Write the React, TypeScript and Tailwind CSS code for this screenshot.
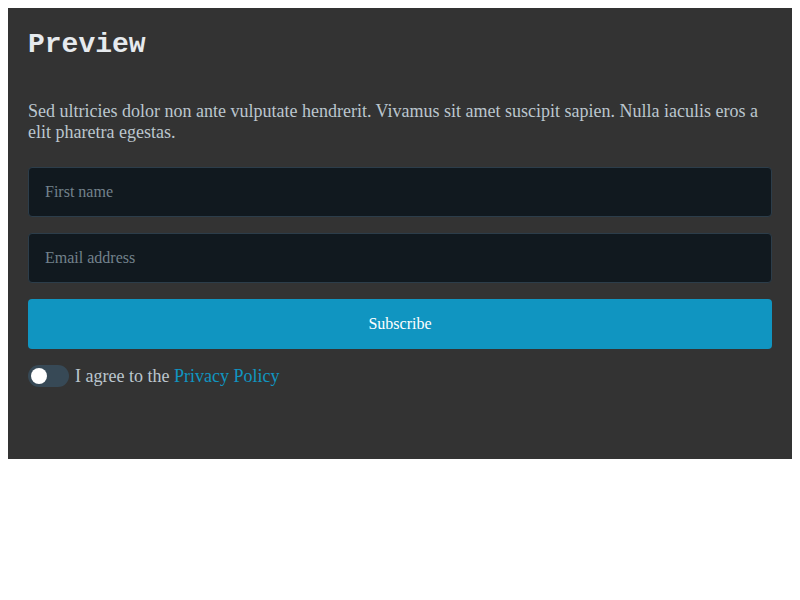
import React from "react";

export default function App() {
  const serif = { fontFamily: '"Liberation Serif", "Times New Roman", serif' };
  return (
    <div className="bg-white p-2 w-[800px] h-[600px]" style={serif}>
      <div className="bg-[#333333] px-5 pt-[21px] h-[451px]">
        <h1
          className="text-[28px] leading-[32px] font-bold text-[#e6eaee]"
          style={{ fontFamily: '"Liberation Mono", "Courier New", monospace' }}
        >
          Preview
        </h1>
        <p className="mt-[40px] text-[18px] leading-[21px] text-[#bbc6ce]">
          Sed ultricies dolor non ante vulputate hendrerit. Vivamus sit amet suscipit sapien. Nulla iaculis eros a elit pharetra egestas.
        </p>
        <form className="mt-[24px] flex flex-col gap-4" onSubmit={(e) => e.preventDefault()}>
          <input
            type="text"
            placeholder="First name"
            className="h-[50px] w-full rounded border border-[#2c3d4a] bg-[#11191f] px-4 text-[16px] text-[#bbc6ce] placeholder:text-[#73828c] outline-none"
            style={serif}
          />
          <input
            type="email"
            placeholder="Email address"
            className="h-[50px] w-full rounded border border-[#2c3d4a] bg-[#11191f] px-4 text-[16px] text-[#bbc6ce] placeholder:text-[#73828c] outline-none"
            style={serif}
          />
          <button
            type="submit"
            className="h-[50px] w-full rounded bg-[#1095c1] text-[16px] text-white"
            style={serif}
          >
            Subscribe
          </button>
          <label className="flex items-center gap-[6px] text-[18px] leading-[22px] text-[#bbc6ce]">
            <span className="relative inline-block w-[41px] h-[22px] rounded-full bg-[#374956]">
              <span className="absolute left-[3px] top-[3px] w-[16px] h-[16px] rounded-full bg-white" />
            </span>
            <span>
              I agree to the <a className="text-[#1095c1]" href="#">Privacy Policy</a>
            </span>
          </label>
        </form>
      </div>
    </div>
  );
}
